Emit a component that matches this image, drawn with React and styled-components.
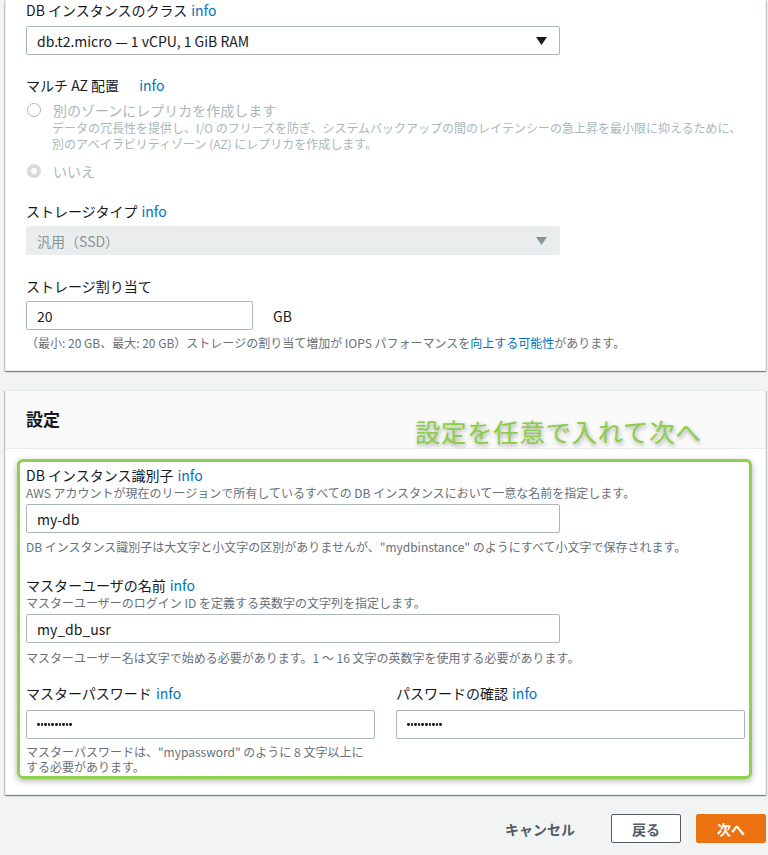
import React from "react";
import styled, { createGlobalStyle } from "styled-components";

const Global = createGlobalStyle`
  html, body { margin: 0; padding: 0; background: #f2f3f3; }
  body {
    font-family: "Noto Sans CJK JP", "Noto Sans", "Open Sans", sans-serif;
    color: #16191f;
  }
  * { box-sizing: border-box; }
`;

const Page = styled.div`
  width: 768px;
  height: 855px;
  padding: 0 2px 0 5px;
  overflow: hidden;
`;

const Panel = styled.section`
  position: relative;
  width: 761px;
  background: #fff;
  border: 1px solid #eaeded;
  border-top: ${(p) => (p.$cut ? "none" : "1px solid #eaeded")};
  box-shadow: 0 1px 1px 0 rgba(0, 28, 36, 0.3), 1px 1px 1px 0 rgba(0, 28, 36, 0.15),
    -1px 1px 1px 0 rgba(0, 28, 36, 0.15);
  margin-top: ${(p) => p.$mt || 0}px;
`;

const PanelBody = styled.div`
  display: flex;
  flex-direction: column;
  padding: 0 20px 19px 20px;
`;

const Header = styled.header`
  height: 58px;
  display: flex;
  align-items: center;
  padding: 0 20px 2px;
  background: #fafafa;
  border-bottom: 1px solid #eaeded;
  font-size: 17px;
  font-weight: 700;
  color: #16191f;
`;

const Annotation = styled.div`
  position: absolute;
  left: 409px;
  top: 25px;
  font-size: 25.5px;
  line-height: 30px;
  letter-spacing: 0.6px;
  color: #8cce45;
  text-shadow: 1px 2px 4px rgba(0, 0, 0, 0.35);
`;

const Label = styled.div`
  font-size: 14px;
  line-height: 20px;
  color: #16191f;
  margin-top: ${(p) => p.$mt || 0}px;
`;

const Info = styled.span`
  color: #0073bb;
  margin-left: ${(p) => p.$gap || 4}px;
`;

const Desc = styled.div`
  font-size: 12px;
  line-height: ${(p) => p.$lh || 16}px;
  color: #687078;
  margin-top: ${(p) => p.$mt || 0}px;
  max-width: ${(p) => (p.$max ? `${p.$max}px` : "none")};
`;

const Muted = styled(Desc)`
  color: #aab7b8;
  padding-left: 26px;
`;

const Box = styled.div`
  width: ${(p) => p.$w}px;
  height: 29px;
  margin-top: ${(p) => p.$mt || 0}px;
  display: flex;
  align-items: center;
  justify-content: space-between;
  padding: 0 12px 0 10px;
  border: 1px solid ${(p) => (p.$disabled ? "#eaeded" : "#aab7b8")};
  border-radius: 2px;
  background: ${(p) => (p.$disabled ? "#eaeded" : "#fff")};
  color: ${(p) => (p.$disabled ? "#879596" : "#16191f")};
  font-size: 14px;
`;

const Dots = styled.span`
  display: flex;
  gap: 1px;
`;

const Dot = styled.i`
  width: 2.6px;
  height: 2.8px;
  border-radius: 50%;
  background: #16191f;
`;

const InputRow = styled.div`
  display: flex;
  align-items: center;
  gap: 20px;
  margin-top: ${(p) => p.$mt || 0}px;
  font-size: 14px;
`;

const RadioRow = styled.div`
  display: flex;
  align-items: center;
  gap: 12px;
  font-size: 14px;
  line-height: 20px;
  color: #aab7b8;
  margin-top: ${(p) => p.$mt || 0}px;
`;

const Radio = styled.span`
  width: 14px;
  height: 14px;
  margin-left: 1px;
  border-radius: 50%;
  border: ${(p) => (p.$checked ? "4px solid #d5dbdb" : "1.5px solid #aab7b8")};
  background: #fff;
  flex: none;
`;

const Link = styled.span`
  color: #0073bb;
`;

const Highlight = styled.div`
  margin: 10px 13px 15px 11px;
  border: 3px solid #8fd14f;
  border-radius: 6px;
  padding: 3px 6px 2px 6px;
  box-shadow: 0 2px 6px rgba(0, 0, 0, 0.3);
  display: flex;
  flex-direction: column;
`;

const Pair = styled.div`
  display: grid;
  grid-template-columns: 349px 349px;
  column-gap: 21px;
  margin-top: 17px;
`;

const Column = styled.div`
  display: flex;
  flex-direction: column;
`;

const Footer = styled.div`
  display: flex;
  justify-content: flex-end;
  align-items: center;
  margin-top: 19px;
  gap: 15px;
`;

const Button = styled.button`
  height: 29px;
  min-width: 70px;
  padding: 0 16px;
  font-family: inherit;
  font-size: 14px;
  font-weight: 700;
  border-radius: 2px;
  cursor: pointer;
  border: 1px solid ${(p) => (p.$variant === "primary" ? "#ec7211" : p.$variant === "text" ? "transparent" : "#545b64")};
  background: ${(p) => (p.$variant === "primary" ? "#ec7211" : p.$variant === "text" ? "transparent" : "#fff")};
  color: ${(p) => (p.$variant === "primary" ? "#fff" : "#545b64")};
  margin-right: ${(p) => (p.$variant === "text" ? "4px" : "0")};
`;

const Caret = ({ color }) => (
  <svg width="11" height="8" viewBox="0 0 11 8">
    <path d="M0 0 L11 0 L5.5 8 Z" fill={color} />
  </svg>
);

const Password = () => (
  <Dots>
    {Array.from({ length: 10 }, (_, i) => (
      <Dot key={i} />
    ))}
  </Dots>
);

export default function App() {
  return (
    <Page>
      <Global />
      <Panel $cut>
        <PanelBody>
          <Label>
            DB インスタンスのクラス<Info>info</Info>
          </Label>
          <Box $w={534} $mt={6}>
            <span>db.t2.micro — 1 vCPU, 1 GiB RAM</span>
            <Caret color="#16191f" />
          </Box>

          <Label $mt={20}>
            マルチ AZ 配置<Info $gap={20}>info</Info>
          </Label>
          <RadioRow $mt={5}>
            <Radio />
            別のゾーンにレプリカを作成します
          </RadioRow>
          <Muted>
            データの冗長性を提供し、I/O のフリーズを防ぎ、システムバックアップの間のレイテンシーの急上昇を最小限に抑えるために、
            <br />
            別のアベイラビリティゾーン (AZ) にレプリカを作成します。
          </Muted>
          <RadioRow $mt={9}>
            <Radio $checked />
            いいえ
          </RadioRow>

          <Label $mt={20}>
            ストレージタイプ<Info>info</Info>
          </Label>
          <Box $w={534} $mt={5} $disabled>
            <span>汎用（SSD）</span>
            <Caret color="#879596" />
          </Box>

          <Label $mt={21}>ストレージ割り当て</Label>
          <InputRow $mt={5}>
            <Box $w={227}>20</Box>
            <span>GB</span>
          </InputRow>
          <Desc $mt={5}>
            （最小: 20 GB、最大: 20 GB）ストレージの割り当て増加が IOPS パフォーマンスを<Link>向上する可能性</Link>があります。
          </Desc>
        </PanelBody>
      </Panel>

      <Panel $mt={19}>
        <Header>設定</Header>
        <Annotation>設定を任意で入れて次へ</Annotation>
        <Highlight>
          <Label>
            DB インスタンス識別子<Info>info</Info>
          </Label>
          <Desc>AWS アカウントが現在のリージョンで所有しているすべての DB インスタンスにおいて一意な名前を指定します。</Desc>
          <Box $w={534} $mt={3}>my-db</Box>
          <Desc $mt={6}>
            DB インスタンス識別子は大文字と小文字の区別がありませんが、"mydbinstance" のようにすべて小文字で保存されます。
          </Desc>

          <Label $mt={20}>
            マスターユーザの名前<Info>info</Info>
          </Label>
          <Desc>マスターユーザーのログイン ID を定義する英数字の文字列を指定します。</Desc>
          <Box $w={534} $mt={3}>my_db_usr</Box>
          <Desc $mt={7}>
            マスターユーザー名は文字で始める必要があります。1 ～ 16 文字の英数字を使用する必要があります。
          </Desc>

          <Pair>
            <Column>
              <Label>
                マスターパスワード<Info>info</Info>
              </Label>
              <Box $w={349} $mt={7}>
                <Password />
              </Box>
              <Desc $mt={5} $max={349} $lh={15}>
                マスターパスワードは、"mypassword" のように 8 文字以上にする必要があります。
              </Desc>
            </Column>
            <Column>
              <Label>
                パスワードの確認<Info>info</Info>
              </Label>
              <Box $w={349} $mt={7}>
                <Password />
              </Box>
            </Column>
          </Pair>
        </Highlight>
      </Panel>

      <Footer>
        <Button $variant="text">キャンセル</Button>
        <Button>戻る</Button>
        <Button $variant="primary">次へ</Button>
      </Footer>
    </Page>
  );
}
